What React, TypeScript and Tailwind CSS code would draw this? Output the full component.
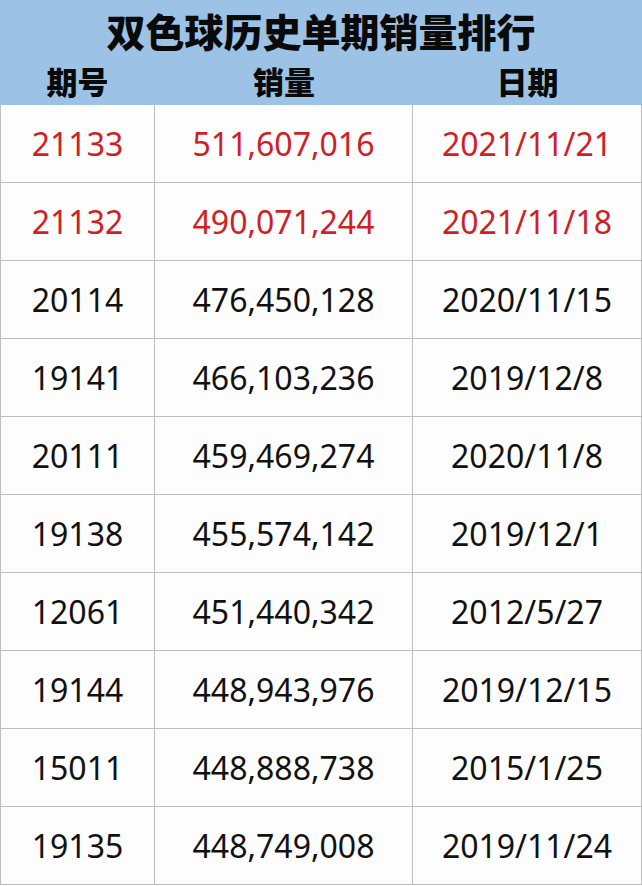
import React from "react";

const rows: { id: string; sales: string; date: string; red?: boolean }[] = [
  { id: "21133", sales: "511,607,016", date: "2021/11/21", red: true },
  { id: "21132", sales: "490,071,244", date: "2021/11/18", red: true },
  { id: "20114", sales: "476,450,128", date: "2020/11/15" },
  { id: "19141", sales: "466,103,236", date: "2019/12/8" },
  { id: "20111", sales: "459,469,274", date: "2020/11/8" },
  { id: "19138", sales: "455,574,142", date: "2019/12/1" },
  { id: "12061", sales: "451,440,342", date: "2012/5/27" },
  { id: "19144", sales: "448,943,976", date: "2019/12/15" },
  { id: "15011", sales: "448,888,738", date: "2015/1/25" },
  { id: "19135", sales: "448,749,008", date: "2019/11/24" },
];

export default function App() {
  return (
    <div
      className="w-[642px] h-[886px] bg-[#fdfdfd] overflow-hidden"
      style={{ fontFamily: '"Noto Sans", "Noto Sans CJK SC", sans-serif' }}
    >
      <div className="h-[105px] bg-[#9cc2e5] flex flex-col text-[#0a0a0a]">
        <div
          className="h-[58px] flex items-center justify-center text-[39px] font-black leading-none pt-[3px]"
          style={{ fontFamily: '"Noto Sans CJK SC", sans-serif' }}
        >
          双色球历史单期销量排行
        </div>
        <div
          className="flex-1 grid grid-cols-[155px_258px_229px] text-[31px] font-black leading-none pb-[2px]"
          style={{ fontFamily: '"Noto Sans CJK SC", sans-serif' }}
        >
          <div className="flex items-center justify-center">期号</div>
          <div className="flex items-center justify-center">销量</div>
          <div className="flex items-center justify-center">日期</div>
        </div>
      </div>
      <div className="grid grid-cols-[155px_258px_229px]">
        {rows.map((r) => {
          const color = r.red ? "text-[#cf1f26]" : "text-[#111111]";
          const cell =
            "h-[78px] flex items-center justify-center border-b border-r border-[#bdbdbd] text-[32px] leading-none " +
            color;
          return (
            <React.Fragment key={r.id}>
              <div className={cell + " border-l"}>{r.id}</div>
              <div className={cell}>{r.sales}</div>
              <div className={cell}>{r.date}</div>
            </React.Fragment>
          );
        })}
      </div>
    </div>
  );
}
